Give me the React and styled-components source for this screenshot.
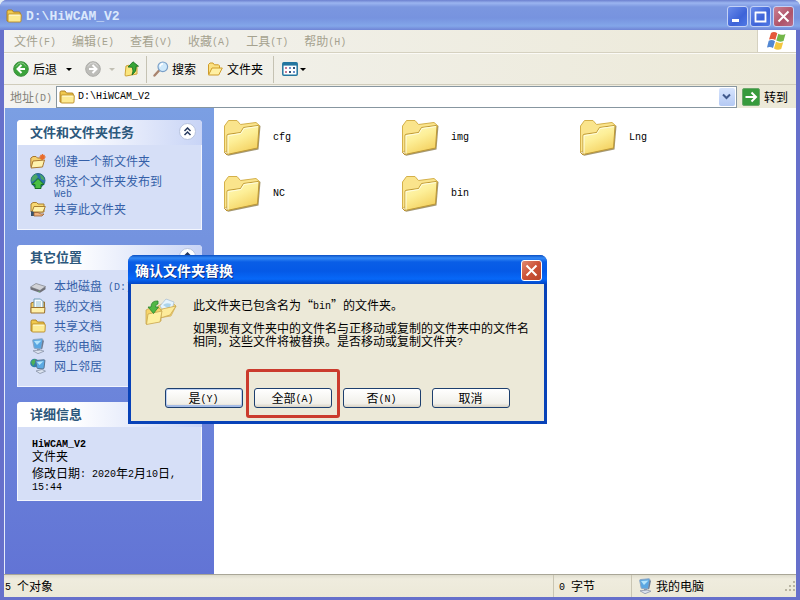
import React, { useState } from 'react';
import styled, { createGlobalStyle, css } from 'styled-components';

const GlobalStyle = createGlobalStyle`
  *, *::before, *::after {
    box-sizing: border-box;
  }

  body {
    margin: 0;
    background: #e4edf4;
    color: #000;
    font-family: 'Noto Sans CJK SC', sans-serif;
    font-size: 12px;
    line-height: 12px;
  }

  button, input {
    font: inherit;
    color: inherit;
    border: 0;
    padding: 0;
    background: none;
  }

  svg {
    display: block;
    flex-shrink: 0;
  }
`;

// Half-width glyphs next to the Chinese text
const Half = styled.span`
  font-family: 'Liberation Mono', monospace;
  font-size: ${props => (props.$big ? '13px' : '10px')};
  line-height: 1px;
  vertical-align: 1px;
  white-space: pre;
`;

const Text = ({ children }) =>
  children.split(/([\x20-\x7e]+)/).filter(Boolean).map((part, i) => (
    /^[\x20-\x7e]/.test(part) ? <Half key={i}>{part}</Half> : <React.Fragment key={i}>{part}</React.Fragment>
  ));

/* ---------- Icons ---------- */

const FolderIcon = ({ size = 16 }) => (
  <svg width={size} height={size} viewBox="0 0 16 16">
    <path d="M1 13V3.5Q1 2 2.5 2H6l1.5 2H13q1.3 0 1.3 1.3V13z" fill="#f0c94e" stroke="#a97b1c" strokeWidth=".9" />
    <path d="M2 13.3V6.8Q2 6 3 6h11.3q1 0 1 1L15 13q0 1-1 1H2.8q-.8 0-.8-.7z" fill="#fdeb93" stroke="#b98a25" strokeWidth=".9" />
    <path d="M3.2 7.2h10.6" stroke="#fffbd8" />
  </svg>
);

const OpenFolderIcon = () => (
  <svg width="16" height="16" viewBox="0 0 16 16">
    <path d="M1.5 13V3.5L3 2h3l1.3 1.8h4.2l1 1V8" fill="#fbe182" stroke="#cf9c2a" />
    <path d="M1.5 14L5 7h10.3l-3.6 7z" fill="#fff0a3" stroke="#cf9c2a" strokeLinejoin="round" />
  </svg>
);

const BigFolderIcon = () => (
  <svg width="38" height="40" viewBox="0 0 38 40">
    <defs>
      <linearGradient id="folderFront" x1="0" y1="0" x2=".5" y2="1">
        <stop offset="0" stopColor="#fffbc0" />
        <stop offset=".5" stopColor="#fdef98" />
        <stop offset="1" stopColor="#f4d262" />
      </linearGradient>
    </defs>
    <path d="M4 39L35.500 32.500L37.500 9L36 8z" fill="#857442" opacity=".75" />
    <path d="M1.500 35.500V9L5.500 3.500L14 3.500L17.500 7.500L33 5.500L36.500 8.500L34 14z" fill="#fae48c" stroke="#d4b04a" strokeLinejoin="round" />
    <path d="M1.500 35.500L4 38" stroke="#b98e2d" />
    <path d="M4 37.500V18.500q0-1 1-1.200L17.500 15.500L20.500 10.500L35 8.500q1 0 1 1L34.500 31z" fill="url(#folderFront)" stroke="#c09a35" strokeLinejoin="round" />
    <path d="M5 36.500V18.700L18 16.500L21 11.500L35 9.600" fill="none" stroke="#fffde0" />
  </svg>
);

const ArrowIcon = ({ forward }) => (
  <svg width="16" height="16" viewBox="0 0 16 16">
    <circle cx="8" cy="8" r="7.300" fill={forward ? '#bdbdb9' : '#3ba33b'} stroke={forward ? '#acaca8' : '#3b8f3e'} />
    <path d="M3 5.500Q5 1.800 8 1.800t5 3.700" fill="none" stroke="#fff" opacity=".4" />
    <path
      d="M8.500 4L4.500 8l4 4M5 8h7"
      transform={forward ? 'rotate(180 8 8)' : undefined}
      fill="none"
      stroke="#fff"
      strokeWidth="2"
    />
  </svg>
);

const UpIcon = () => (
  <svg width="16" height="16" viewBox="0 0 16 16">
    <path d="M1 14.500L2 5l3-.8L6.500 5.500L13 5v8l-11 2z" fill="#fbe67e" stroke="#cda337" />
    <path d="M4 6L9 .8l5.500 4.400h-2.300q.8 5.300-4.200 8.800 1.800-4 .3-7.700z" fill="#36a537" stroke="#176b22" strokeWidth=".8" />
  </svg>
);

const SearchIcon = () => (
  <svg width="16" height="16" viewBox="0 0 16 16">
    <path d="M6.500 9L1.500 14.500" stroke="#a9846e" strokeWidth="2.400" strokeLinecap="round" />
    <circle cx="9.800" cy="5.800" r="4.800" fill="#cfe9fb" stroke="#7ba0c8" strokeWidth="1.200" />
    <path d="M7 5.500Q7.500 3 10 2.800" fill="none" stroke="#fff" strokeWidth="1.400" />
  </svg>
);

const ViewsIcon = () => (
  <svg width="16" height="14" viewBox="0 0 16 14">
    <rect x=".8" y=".8" width="14.400" height="12.400" rx="1" fill="#fff" stroke="#24769f" strokeWidth="1.500" />
    <path d="M1 2.200h14" stroke="#24769f" strokeWidth="2.800" />
    <path d="M3 6h2M3 10h2" stroke="#c97b94" strokeWidth="2" />
    <path d="M7 6h2M11 10h2" stroke="#6e8fc9" strokeWidth="2" />
    <path d="M7 10h2M11 6h2" stroke="#34557b" strokeWidth="2" />
  </svg>
);

const Triangle = ({ faded }) => (
  <svg width="6" height="3" viewBox="0 0 6 3">
    <path d="M0 0h6L3 3z" fill={faded ? '#c2c0b4' : '#000'} />
  </svg>
);

const FlagIcon = () => (
  <svg width="20" height="20" viewBox="0 0 20 20">
    <path d="M4 2q3-2 6.300.2L8.300 9Q5.300 7 2 8.600z" fill="#e5583a" />
    <path d="M11.300 2.800q3 2 7.200.2L16.500 10q-3.600 1.600-7.200-.4z" fill="#73b64a" />
    <path d="M1.700 9.800q3.200-1.600 6.300.4L6 17Q3 15 0 16.600z" fill="#5287d3" />
    <path d="M9 10.800q3.600 2 7.200.4L14.200 18q-3.800 1.600-7.200-.5z" fill="#f3c63f" />
  </svg>
);

const NewFolderIcon = () => (
  <svg width="16" height="16" viewBox="0 0 16 16">
    <path d="M.8 13.500V5L3 3.500h3L7.500 5H12v8.500z" fill="#f5d06d" stroke="#a87732" />
    <path d="M1 15L3 8l11.500-1L12.500 14z" fill="#fff2ac" stroke="#a87732" strokeLinejoin="round" />
    <path d="M12.500 1v6M9.500 4h6M10.500 2l4 4M14.500 2l-4 4" stroke="#e96c2b" strokeWidth="1.300" />
  </svg>
);

const GlobeIcon = () => (
  <svg width="16" height="16" viewBox="0 0 16 16">
    <circle cx="8" cy="7.500" r="7" fill="#2b6fae" stroke="#2b6b84" />
    <path d="M1.500 8Q1 3 6 1l2 3-3 3-3 2zM10 1.500q4 1.500 4.500 6L11 6z" fill="#4da864" />
    <path d="M8 5.500L14 11.500h-3V15.500H5v-4H2z" fill="#49bf42" stroke="#176f25" />
  </svg>
);

const ShareFolderIcon = () => (
  <svg width="16" height="16" viewBox="0 0 16 16">
    <path d="M1 11V3l2-1.500h3.500L8 3h6v8z" fill="#f7d873" stroke="#aa7f31" />
    <path d="M2 11L4 5.500h11.300L13 11z" fill="#fff2aa" stroke="#aa7f31" />
    <path d="M1 10v5h3v-4z" fill="#39536d" />
    <path d="M4 11.500h4l3 1.500h3l-2 2H4z" fill="#edb27e" stroke="#9b6133" strokeWidth=".8" />
  </svg>
);

const DriveIcon = () => (
  <svg width="16" height="16" viewBox="0 0 16 16">
    <path d="M.5 9L6 5.500l9.500 3L10 12.500z" fill="#d2d3d7" stroke="#898b92" strokeWidth=".8" />
    <path d="M.5 9v2.500l9.500 3.300v-2.300zM10 12.500v2.300l5.500-3.500V8.500z" fill="#707178" />
    <path d="M9 13.300l.1.900" stroke="#67e46e" />
  </svg>
);

const DocumentsIcon = () => (
  <svg width="16" height="16" viewBox="0 0 16 16">
    <path d="M1 14.500V5l3-1h10.500v10.500z" fill="#efc962" stroke="#9c7331" />
    <path d="M4 10V1h6.500L13 3.500V10z" fill="#f7fcff" stroke="#709cb6" />
    <path d="M6 4h5M6 6h5M6 8h5" stroke="#81b4cb" strokeWidth=".8" />
    <path d="M1 15V9.500h14L14.500 15z" fill="#fff0a8" stroke="#9c7331" strokeLinejoin="round" />
  </svg>
);

const ComputerIcon = () => (
  <svg width="16" height="16" viewBox="0 0 16 16">
    <path d="M3.500 1.500L12 .8q1 0 .8 1L11.500 10q-.2.900-1.200.9L5 10.500q-.8 0-.9-.9L2.700 2.500q-.1-.9.8-1z" fill="#5aa7e2" stroke="#8ba6c4" />
    <path d="M4 3l7.500-.6L7 7z" fill="#b4e4fb" />
    <path d="M12.500 2l1.500.8-1.700 8-1.300.6z" fill="#6b7b94" />
    <path d="M7 11h3v2H7z" fill="#8797ae" />
    <path d="M3 12.800l7-.8 4 1.200-6 2.500z" fill="#dbe2ef" stroke="#8c96aa" strokeWidth=".8" />
  </svg>
);

const NetworkIcon = () => (
  <svg width="16" height="16" viewBox="0 0 16 16">
    <circle cx="4.500" cy="5" r="4.300" fill="#2f7fab" />
    <path d="M1 4q2-3.500 5-2.500L5 5 3 8z" fill="#4cb159" />
    <path d="M5.500 2.500L14 1.800q1 0 .9 1L14 10q-.2 1-1.200.9L8 10.500q-.9 0-1.100-.9z" fill="#5aa9e3" stroke="#56728f" />
    <path d="M7 4l6.500-.7L9.500 7z" fill="#b9e8fb" />
    <path d="M6 13l6-1.500 3.500 1.700-5.500 2.300z" fill="#dde4f0" stroke="#8792a6" strokeWidth=".8" />
  </svg>
);

const ReplaceIcon = () => (
  <svg width="32" height="28" viewBox="0 0 32 28">
    <path d="M13 20V8l4-2 3 2 9-2 2 2-5 10z" fill="#f6d974" stroke="#d2b060" strokeWidth=".8" />
    <path d="M15 8l6-7 8 3-2 8-8 2z" fill="#e5f4fd" stroke="#adc2d4" strokeWidth=".8" />
    <path d="M18 7q3-3 8-1l-2 5z" fill="#abd4ec" />
    <path d="M12 21l5-10 14-3-6 9z" fill="#fdeb9b" stroke="#c9a64f" strokeWidth=".8" />
    <path d="M1 26V12l4-2 3 2 6-2 2 2v11z" fill="#f6d56a" stroke="#c9a64f" strokeWidth=".8" />
    <path d="M1.500 26.500L3 16l14-3-2 11z" fill="#fef0a0" stroke="#c9a64f" strokeWidth=".8" />
    <path d="M13 3Q6 2.500 6 9H3l5.500 6.500L13.500 9h-3Q10.500 6 13 6z" fill="#52b846" stroke="#2a8429" strokeWidth=".8" />
  </svg>
);

const GoIcon = () => (
  <svg width="18" height="18" viewBox="0 0 18 18">
    <rect x=".5" y=".5" width="17" height="17" rx="1.500" fill="#379b3d" stroke="#6aa76b" />
    <path d="M3.500 9h10M9.500 4.500L14 9l-4.500 4.500" fill="none" stroke="#fff" strokeWidth="2" />
  </svg>
);

const GripIcon = () => (
  <svg width="12" height="12" viewBox="0 0 12 12">
    <path d="M9 1h2v2H9zM5 5h2v2H5zM9 5h2v2H9zM1 9h2v2H1zM5 9h2v2H5zM9 9h2v2H9z" fill="#b9b5a3" />
  </svg>
);

const Glyph = ({ kind }) => (
  <svg width="13" height="13" viewBox="0 0 13 13">
    {kind === 'min' && <path d="M1 10.500h7" stroke="#fff" strokeWidth="3" />}
    {kind === 'max' && (
      <path d="M1.500 2v9.500h10V2M0.800 2.500h11.400" fill="none" stroke="#fff" strokeWidth="1.800" />
    )}
    {kind === 'close' && <path d="M1.500 1.500l10 10M11.500 1.500l-10 10" stroke="#fff" strokeWidth="2" />}
  </svg>
);

/* ---------- Window ---------- */

const Window = styled.div`
  position: relative;
  display: flex;
  flex-direction: column;
  min-height: 100vh;
  padding: 0 4px 3px;
  background: #6670cb;
  border-radius: 7px 7px 0 0;
`;

const TitleBar = styled.header`
  display: flex;
  align-items: center;
  gap: 4px;
  height: 30px;
  margin: 0 -4px;
  padding: 2px 6px 0;
  border-radius: 7px 7px 0 0;
  background: linear-gradient(#6c80cf 0, #9bb5f0 3px, #7b97e0 7px, #7793df 18px, #83a6e9 26px, #6f84d5 30px);
`;

const WindowTitle = styled.h1`
  flex: 1;
  margin: 0;
  color: #dbe8fc;
  font-size: 13px;
  line-height: 16px;
`;

const CaptionButton = styled.button`
  display: grid;
  place-items: center;
  width: 21px;
  height: 21px;
  border: 1px solid #c3d1f6;
  border-radius: 3px;
  background: linear-gradient(135deg, #6b8cea, #3d63d8 60%, #5079e5);

  ${props => props.$close && css`
    background: linear-gradient(135deg, #cb8092, #ae5369 60%, #b96f8c);
  `}

  ${props => props.$active && css`
    border-color: #fff;
    background: linear-gradient(135deg, #e08a72, #cc5238 50%, #b8442a);
  `}
`;

const CaptionGroup = styled.div`
  display: flex;
  gap: 2px;
`;

const MenuBar = styled.nav`
  display: flex;
  align-items: stretch;
  height: 23px;
  border-bottom: 1px solid #d5d1c0;
  background: linear-gradient(90deg, #f3f3f0, #ece9d8);
`;

const MenuList = styled.div`
  flex: 1;
  display: flex;
  align-items: center;
  gap: 16px;
  padding-left: 10px;
`;

const MenuItem = styled.button`
  color: #a5a28f;
`;

const FlagCell = styled.div`
  display: grid;
  place-items: center;
  width: 39px;
  border-left: 1px solid #d5d1c0;
  background: #fff;
`;

const Toolbar = styled.div`
  display: flex;
  align-items: center;
  height: 32px;
  padding-left: 9px;
  border-top: 1px solid #fbfaf6;
  border-bottom: 1px solid #d0ccbb;
  background: linear-gradient(90deg, #f3f3f0, #ece9d8);
`;

const ToolButton = styled.button`
  display: flex;
  align-items: center;
  gap: ${props => props.$gap || 4}px;
  margin-right: ${props => props.$after || 0}px;
`;

const Separator = styled.span`
  width: 1px;
  height: 27px;
  margin-right: ${props => props.$after}px;
  background: #c5c2b3;
`;

const AddressBar = styled.div`
  display: flex;
  align-items: center;
  height: 23px;
  padding: 0 8px 0 6px;
  background: linear-gradient(90deg, #f3f3f0, #ece9d8);
`;

const AddressLabel = styled.label`
  margin-right: 4px;
  color: #85837a;
`;

const AddressField = styled.div`
  flex: 1;
  display: flex;
  align-items: center;
  gap: 3px;
  height: 22px;
  padding: 1px 1px 1px 2px;
  border: 1px solid #8796a0;
  background: #fff;
`;

const AddressInput = styled.input`
  flex: 1;
  min-width: 0;
  outline: 0;
  font-family: 'Liberation Mono', monospace;
  font-size: 10px;
`;

const DropButton = styled.button`
  display: grid;
  place-items: center;
  width: 16px;
  height: 18px;
  border-radius: 2px;
  background: linear-gradient(#d7e4fd, #b4c9f4);
`;

const GoButton = styled.button`
  display: flex;
  align-items: center;
  gap: 4px;
  margin-left: 5px;
`;

const Content = styled.main`
  flex: 1;
  display: flex;
  border-left: 1px solid #e6ecfa;
  background: #fff;
`;

const Sidebar = styled.aside`
  display: flex;
  flex-direction: column;
  gap: 15px;
  width: 209px;
  flex-shrink: 0;
  padding: 12px;
  background: linear-gradient(#7b9fe3, #6274d5);
`;

const PanelBox = styled.section`
  border: 1px solid #f2f5fe;
  border-top: 0;
  border-radius: 4px 4px 0 0;
  background: #d6dff7;
`;

const PanelHeader = styled.header`
  display: flex;
  align-items: center;
  justify-content: space-between;
  height: 25px;
  margin: 0 -1px;
  padding: 0 6px 2px 13px;
  border-radius: 4px 4px 0 0;
  background: linear-gradient(90deg, #fff 30%, #c8d4f6);
`;

const PanelTitle = styled.h2`
  margin: 0;
  color: #2c587c;
  font-size: 13px;
  line-height: 16px;
`;

const Chevron = styled.button`
  display: grid;
  place-items: center;
  width: 17px;
  height: 17px;
  border: 1px solid #b7c3de;
  border-radius: 50%;
  background: #fff;
`;

const TaskList = styled.ul`
  display: flex;
  flex-direction: column;
  gap: 2px;
  margin: 0;
  padding: 8px 12px 10px;
  list-style: none;
`;

const TaskLink = styled.a`
  display: flex;
  gap: 8px;
  min-height: 18px;
  color: #355fa8;
  text-decoration: none;
  white-space: nowrap;
`;

const TaskText = styled.div`
  padding-top: 2px;
`;

const Details = styled.div`
  display: flex;
  flex-direction: column;
  gap: 4px;
  padding: 9px 14px 8px;
  line-height: 13px;
`;

const FileGrid = styled.div`
  flex: 1;
  display: grid;
  grid-template-columns: repeat(auto-fill, 178px);
  grid-auto-rows: 56px;
  padding: 10px 0 0 9px;
`;

const FileItem = styled.button`
  display: flex;
  align-items: center;
  align-self: start;
  gap: 12px;
  height: 38px;
`;

const StatusBar = styled.footer`
  display: flex;
  align-items: center;
  height: 23px;
  border-top: 1px solid #a9a697;
  background: linear-gradient(#dedccd, #efecde 4px, #ece9d8);
`;

const StatusCell = styled.div`
  display: flex;
  align-items: center;
  align-self: stretch;
  gap: 3px;
  width: ${props => props.$width || 'auto'};
  flex: ${props => (props.$width ? 'none' : 1)};
  padding-left: ${props => (props.$first ? 1 : 5)}px;
  border-left: ${props => (props.$first ? '0' : '1px solid #c9c5b3')};
`;

/* ---------- Dialog ---------- */

const DialogBox = styled.div`
  position: absolute;
  left: 128px;
  top: 255px;
  width: 419px;
  padding: 0 3px 3px;
  border-radius: 7px 7px 0 0;
  background: #0842b8;
`;

const DialogTitleBar = styled.header`
  display: flex;
  align-items: center;
  justify-content: space-between;
  height: 29px;
  margin: 0 -3px;
  padding: 1px 5px 0 7px;
  border-radius: 7px 7px 0 0;
  background: linear-gradient(#0a4fc4 0, #3389f5 3px, #0a5ee6 7px, #0559e6 16px, #0768f8 24px, #0346c4 29px);
`;

const DialogTitle = styled.h2`
  margin: 0;
  color: #fff;
  font-size: 14px;
  line-height: 18px;
  text-shadow: 1px 1px #0a2f86;
`;

const DialogBody = styled.div`
  padding: 14px 15px 13px 14px;
  background: #ece9d8;
`;

const Message = styled.div`
  display: flex;
  gap: 16px;
  min-height: 90px;
  line-height: 13px;

  p {
    margin: 0 0 10px;
  }
`;

const ButtonRow = styled.div`
  display: flex;
  justify-content: center;
  gap: 11px;
`;

const ButtonSlot = styled.div`
  position: relative;
`;

const PushButton = styled.button`
  width: 78px;
  height: 20px;
  border: 1px solid #1d3f6e;
  border-radius: 3px;
  background: linear-gradient(#fff, #f1f0ea 80%, #d8d2c4);
  ${props => props.$default && css`
    box-shadow: inset 0 -2px #a5bce6, inset 0 0 0 1px #bcd0f3;
  `}
`;

const Marker = styled.span`
  position: absolute;
  inset: -19px -8px -10px;
  border: 3px solid #cb3b2d;
  border-radius: 3px;
  pointer-events: none;
`;

const menus = ['文件(F)', '编辑(E)', '查看(V)', '收藏(A)', '工具(T)', '帮助(H)'];

const fileTasks = [
  { icon: <NewFolderIcon />, text: '创建一个新文件夹' },
  { icon: <GlobeIcon />, text: '将这个文件夹发布到', second: 'Web' },
  { icon: <ShareFolderIcon />, text: '共享此文件夹' },
];

const places = [
  { icon: <DriveIcon />, text: '本地磁盘 (D:)' },
  { icon: <DocumentsIcon />, text: '我的文档' },
  { icon: <FolderIcon />, text: '共享文档' },
  { icon: <ComputerIcon />, text: '我的电脑' },
  { icon: <NetworkIcon />, text: '网上邻居' },
];

const files = ['cfg', 'img', 'Lng', 'NC', 'bin'];

const answers = [
  { text: '是(Y)', isDefault: true },
  { text: '全部(A)', marked: true },
  { text: '否(N)' },
  { text: '取消' },
];

const Panel = ({ title, children }) => (
  <PanelBox>
    <PanelHeader>
      <PanelTitle>{title}</PanelTitle>
      <Chevron aria-label={`折叠${title}`}>
        <svg width="9" height="9" viewBox="0 0 9 9">
          <path d="M1.500 4L4.500 1l3 3M1.500 8L4.500 5l3 3" fill="none" stroke="#26395f" strokeWidth="1.500" />
        </svg>
      </Chevron>
    </PanelHeader>
    {children}
  </PanelBox>
);

const Tasks = ({ items }) => (
  <TaskList>
    {items.map(item => (
      <li key={item.text}>
        <TaskLink href="#">
          {item.icon}
          <TaskText>
            <Text>{item.text}</Text>
            {item.second && <div><Text>{item.second}</Text></div>}
          </TaskText>
        </TaskLink>
      </li>
    ))}
  </TaskList>
);

const App = () => {
  const [address, setAddress] = useState('D:\\HiWCAM_V2');

  return (
    <>
      <GlobalStyle />
      <Window lang="zh-CN">
        <TitleBar>
          <FolderIcon />
          <WindowTitle><Half $big>D:\HiWCAM_V2</Half></WindowTitle>
          <CaptionGroup>
            <CaptionButton aria-label="最小化"><Glyph kind="min" /></CaptionButton>
            <CaptionButton aria-label="最大化"><Glyph kind="max" /></CaptionButton>
            <CaptionButton $close aria-label="关闭"><Glyph kind="close" /></CaptionButton>
          </CaptionGroup>
        </TitleBar>

        <MenuBar>
          <MenuList>
            {menus.map(menu => <MenuItem key={menu}><Text>{menu}</Text></MenuItem>)}
          </MenuList>
          <FlagCell><FlagIcon /></FlagCell>
        </MenuBar>

        <Toolbar>
          <ToolButton $after={9}><ArrowIcon />后退</ToolButton>
          <ToolButton $after={13} aria-label="后退列表"><Triangle /></ToolButton>
          <ToolButton $after={8} aria-label="前进"><ArrowIcon forward /></ToolButton>
          <ToolButton $after={9} aria-label="前进列表"><Triangle faded /></ToolButton>
          <ToolButton $after={6} aria-label="向上"><UpIcon /></ToolButton>
          <Separator $after={6} />
          <ToolButton $after={11} $gap={3}><SearchIcon />搜索</ToolButton>
          <ToolButton $after={10}><OpenFolderIcon />文件夹</ToolButton>
          <Separator $after={8} />
          <ToolButton $gap={2} aria-label="查看"><ViewsIcon /><Triangle /></ToolButton>
        </Toolbar>

        <AddressBar>
          <AddressLabel htmlFor="address"><Text>地址(D)</Text></AddressLabel>
          <AddressField>
            <FolderIcon />
            <AddressInput id="address" value={address} onChange={e => setAddress(e.target.value)} />
            <DropButton aria-label="地址列表">
              <svg width="9" height="7" viewBox="0 0 9 7">
                <path d="M1 1.500L4.500 5L8 1.500" fill="none" stroke="#40598c" strokeWidth="2" />
              </svg>
            </DropButton>
          </AddressField>
          <GoButton><GoIcon />转到</GoButton>
        </AddressBar>

        <Content>
          <Sidebar>
            <Panel title="文件和文件夹任务"><Tasks items={fileTasks} /></Panel>
            <Panel title="其它位置"><Tasks items={places} /></Panel>
            <Panel title="详细信息">
              <Details>
                <div>
                  <b><Text>HiWCAM_V2</Text></b>
                  <div>文件夹</div>
                </div>
                <div>
                  <div><Text>修改日期: 2020年2月10日,</Text></div>
                  <div><Text>15:44</Text></div>
                </div>
              </Details>
            </Panel>
          </Sidebar>
          <FileGrid>
            {files.map(file => (
              <FileItem key={file}><BigFolderIcon /><Text>{file}</Text></FileItem>
            ))}
          </FileGrid>
        </Content>

        <StatusBar>
          <StatusCell $first><span><Text>5 个对象</Text></span></StatusCell>
          <StatusCell $width="78px"><span><Text>0 字节</Text></span></StatusCell>
          <StatusCell $width="153px"><ComputerIcon />我的电脑</StatusCell>
          <GripIcon />
        </StatusBar>

        <DialogBox role="dialog" aria-labelledby="dialog-title">
          <DialogTitleBar>
            <DialogTitle id="dialog-title">确认文件夹替换</DialogTitle>
            <CaptionButton $active aria-label="关闭对话框"><Glyph kind="close" /></CaptionButton>
          </DialogTitleBar>
          <DialogBody>
            <Message>
              <ReplaceIcon />
              <div>
                <p><Text>此文件夹已包含名为“bin”的文件夹。</Text></p>
                <p><Text>如果现有文件夹中的文件名与正移动或复制的文件夹中的文件名相同，这些文件将被替换。是否移动或复制文件夹?</Text></p>
              </div>
            </Message>
            <ButtonRow>
              {answers.map(answer => (
                <ButtonSlot key={answer.text}>
                  <PushButton $default={answer.isDefault}><Text>{answer.text}</Text></PushButton>
                  {answer.marked && <Marker />}
                </ButtonSlot>
              ))}
            </ButtonRow>
          </DialogBody>
        </DialogBox>
      </Window>
    </>
  );
};

export default App;
